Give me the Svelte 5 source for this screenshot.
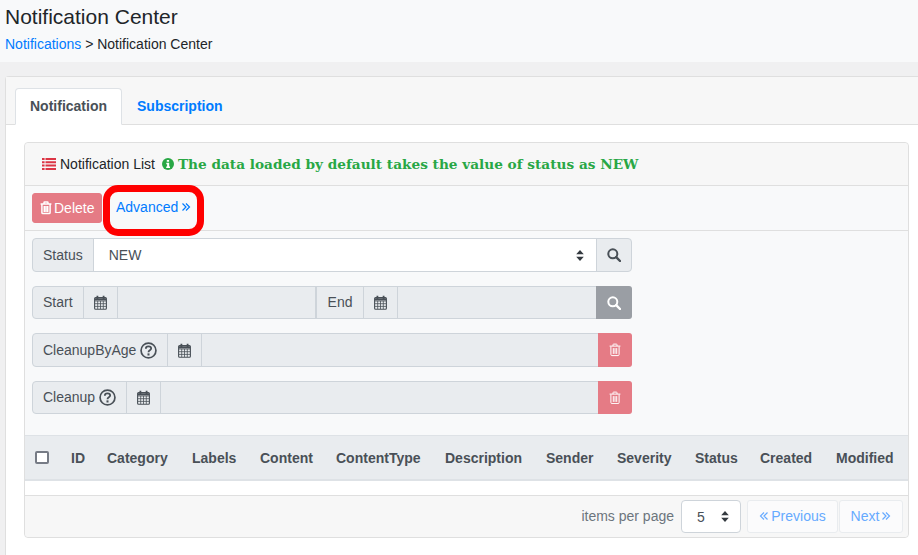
<script>
  const columns = ['ID','Category','Labels','Content','ContentType','Description','Sender','Severity','Status','Created','Modified'];
</script>

{#snippet cal()}
  <svg class="ic" width="13" height="15" viewBox="0 0 13 15" fill="none" stroke="#495057" stroke-width="1.1">
    <rect x="0.6" y="2.5" width="11.8" height="11.7" rx="1"/>
    <path d="M1 6h11M1 8.700h11M1 11.400h11M3.700 6v8M6.500 6v8M9.300 6v8" stroke-width=".8"/>
    <path d="M1 4.300h11" stroke-width="2.200"/>
    <path d="M3.400 .8v3.200M9.600 .8v3.200" stroke-width="1.800"/>
  </svg>
{/snippet}
{#snippet search(color)}
  <svg width="14" height="14" viewBox="0 0 14 14" fill="none" stroke={color} stroke-width="2">
    <circle cx="5.800" cy="5.800" r="4.500"/><path d="M9.200 9.200l3.800 3.800" stroke-width="2.400" stroke-linecap="round"/>
  </svg>
{/snippet}
{#snippet trash(size, sw)}
  <svg width={size} height={size*1.1} viewBox="0 0 12 13" fill="none" stroke="#fff" stroke-width={sw}>
    <path d="M1.900 3.400v8c0 .7.400 1.100 1 1.100h6.200c.6 0 1-.4 1-1.100v-8M.6 3h10.800M4 3V1.600c0-.4.2-.6.6-.6h2.800c.4 0 .6.2.6.6V3M4.300 5v5.800M6 5v5.800M7.700 5v5.800"/>
  </svg>
{/snippet}
{#snippet help()}
  <svg class="help" width="17" height="17" viewBox="0 0 16 16" fill="none" stroke="#495057">
    <circle cx="8" cy="8" r="7" stroke-width="1.600"/>
    <path d="M5.500 6.300c0-1.500 1.100-2.200 2.500-2.200s2.500.8 2.500 2c0 1.800-2.500 1.700-2.500 3.500" stroke-width="1.700"/>
    <path d="M8 10.700v2" stroke-width="1.900"/>
  </svg>
{/snippet}
{#snippet angles(dir)}
  <svg class="ang" width="10" height="10" viewBox="0 0 10 10" fill="none" stroke="currentColor" stroke-width="1.200">
    {#if dir === 'r'}<path d="M1.500 1.500L5 5 1.500 8.500M5 1.500L8.500 5 5 8.500"/>{:else}<path d="M8.500 1.500L5 5l3.500 3.500M5 1.500L1.500 5 5 8.500"/>{/if}
  </svg>
{/snippet}

<div class="page">
  <header class="top">
    <h1>Notification Center</h1>
    <div class="crumb"><a href="#n">Notifications</a> &gt; Notification Center</div>
  </header>

  <div class="band">
    <section class="outer">
      <nav class="tabs">
        <span class="tab active">Notification</span>
        <span class="tab">Subscription</span>
      </nav>
      <div class="tabbody">
        <div class="card">
          <div class="cardhead">
            <svg class="listic" width="14" height="12" viewBox="0 0 14 12" fill="#dc3545">
              <path d="M0 0h2.600v2H0zM3.500 0H14v2H3.500zM0 3.300h2.600v2H0zM3.500 3.300H14v2H3.500zM0 6.600h2.600v2H0zM3.500 6.600H14v2H3.500zM0 9.900h2.600v2H0zM3.500 9.900H14v2H3.500z"/>
            </svg>
            <span class="ctitle">Notification List</span>
            <svg class="info" width="12" height="12" viewBox="0 0 12 12">
              <circle cx="6" cy="6" r="6" fill="#28a745"/>
              <path d="M4.800 2h2.300v1.800H4.800zM4.300 4.800h2.900v3.600h.8v1.500H4.200V8.400h.9V6.300h-.8z" fill="#fff"/>
            </svg>
            <b class="note">The data loaded by default takes the value of status as NEW</b>
          </div>

          <div class="toolbar">
            <button class="del">{@render trash(12, 1.500)} Delete</button>
            <a class="adv" href="#a">Advanced {@render angles('r')}</a>
            <span class="mark"></span>
          </div>

          <div class="forms">
            <div class="group g1">
              <span class="addon">Status</span>
              <span class="select">NEW
                <svg class="caret" width="8" height="11" viewBox="0 0 8 11" fill="#343a40"><path d="M4 0l3.800 4.200H.2zM4 11L.2 6.800h7.600z"/></svg>
              </span>
              <span class="addon end btn">{@render search('#495057')}</span>
            </div>
            <div class="group g2">
              <span class="addon">Start</span>
              <span class="addon icon">{@render cal()}</span>
              <span class="field f1"></span>
              <span class="addon endlabel">End</span>
              <span class="addon icon">{@render cal()}</span>
              <span class="field"></span>
              <span class="addon end grey">{@render search('#fff')}</span>
            </div>
            <div class="group g3">
              <span class="addon">CleanupByAge {@render help()}</span>
              <span class="addon icon">{@render cal()}</span>
              <span class="field"></span>
              <span class="addon end red">{@render trash(12, 1)}</span>
            </div>
            <div class="group g4">
              <span class="addon">Cleanup {@render help()}</span>
              <span class="addon icon">{@render cal()}</span>
              <span class="field"></span>
              <span class="addon end red">{@render trash(12, 1)}</span>
            </div>
          </div>

          <div class="thead">
            <span class="check"></span>
            {#each columns as c}<span class="th">{c}</span>{/each}
          </div>
          <div class="row"></div>

          <footer class="foot">
            <span class="ipp">items per page</span>
            <span class="size">5
              <svg width="8" height="11" viewBox="0 0 8 11" fill="#343a40"><path d="M4 0l3.800 4.200H.2zM4 11L.2 6.800h7.600z"/></svg>
            </span>
            <span class="pg prev">{@render angles('l')} Previous</span>
            <span class="pg next">Next {@render angles('r')}</span>
          </footer>
        </div>
      </div>
    </section>
  </div>
</div>

<style>
  :global(body) { margin: 0; background: #fff; overflow: hidden; }
  .page { width: 918px; height: 555px; overflow: hidden; font-family: "Liberation Sans", Arial, sans-serif; font-size: 14px; color: #212529; }
  .top { height: 62px; background: #f8f9fa; padding: 5px 5px 0; box-sizing: border-box; }
  h1 { margin: 0; font-size: 21px; font-weight: 400; line-height: 24px; }
  .crumb { margin-top: 5px; line-height: 21px; }
  a { color: #007bff; text-decoration: none; }
  .band { background: #f0f0f1; padding: 14px 0 0 5px; }
  .outer { background: #fff; border: 1px solid #dfdfdf; border-right: 0; border-radius: 4px 0 0 0; height: 500px; }
  .tabs { display: flex; height: 48px; box-sizing: border-box; padding: 11px 0 0 9px; background: #f7f7f7; border-bottom: 1px solid #dfdfdf; }
  .tab { height: 36px; box-sizing: border-box; padding: 9px 14px; font-weight: 700; color: #007bff; line-height: 17px; border: 1px solid transparent; border-radius: 4px 4px 0 0; }
  .tab.active { background: #fff; color: #495057; border-color: #dee2e6 #dee2e6 #fff; height: 37px; }
  .tabbody { padding: 17px 9px 0 18px; }
  .card { position: relative; border: 1px solid #dfdfdf; border-radius: 4px; background: #f8f9fa; height: 396px; box-sizing: border-box; width: 885px; display: flex; flex-direction: column; }
  .cardhead { height: 43px; box-sizing: border-box; display: flex; align-items: center; padding: 0 0 0 17px; background: #f7f7f7; border-bottom: 1px solid #dfdfdf; border-radius: 4px 4px 0 0; }
  .listic { margin-right: 4px; }
  .ctitle { margin-right: 7px; }
  .info { margin-right: 4px; }
  .note { font-family: "DejaVu Serif", serif; font-size: 13.660px; color: #28a745; }
  .toolbar { height: 45px; flex: none; box-sizing: border-box; display: flex; align-items: center; padding: 0 0 0 7px; border-bottom: 1px solid #dfdfdf; position: relative; }
  .del { display: flex; align-items: center; gap: 2px; height: 30px; width: 70px; box-sizing: border-box; padding: 0 0 0 7px; background: #e57b85; color: #fff; border: 1px solid #e57b85; border-radius: 3px; font: 14px "Liberation Sans", sans-serif; }
  .adv { margin: -3px 0 0 14px; display: inline-flex; align-items: center; gap: 3px; }
  .mark { position: absolute; left: 78px; top: -1px; width: 101px; height: 51px; box-sizing: border-box; border: 7px solid #f00; border-radius: 15px; }
  .forms { padding: 7px 0 0 7px; flex: none; height: 204px; box-sizing: border-box; }
  .group { display: flex; width: 600px; height: 34px; box-sizing: border-box; border: 1px solid #ced4da; border-radius: 4px; background: #e9ecef; color: #495057; margin-bottom: 14px; }
  .g2, .g4 { height: 33px; }
  .g2 .addon, .g4 .addon { padding-bottom: 1px; }
  .addon { display: flex; align-items: center; gap: 4px; padding: 0 10px; border-right: 1px solid #ced4da; line-height: 1; white-space: nowrap; flex: none; }
  .addon.endlabel { padding-left: 11px; }
  .addon.end { width: 35px; box-sizing: border-box; justify-content: center; padding: 0; border-right: 0; margin-left: auto; border-radius: 0 3px 3px 0; }
  .btn { border-left: 1px solid #ced4da; margin: 0; }
  .addon.grey { width: 36px; background: #9a9ea4; margin: -1px -1px -1px 0; }
  .addon.red { width: 34px; background: #e57b85; margin: -1px -1px -1px 0; }
  .select { flex: 1; background: #fff; display: flex; align-items: center; justify-content: space-between; padding: 0 12px 0 15px; color: #495057; }
  .field { flex: 1; }
  .f1 { flex: none; width: 197px; border-right: 2px solid #ced4da; }
  .thead { height: 46px; flex: none; box-sizing: border-box; display: grid; grid-template-columns: 36px 36px 85px 68px 76px 109px 101px 71px 78px 65px 76px auto; align-items: center; padding-left: 10px; background: #e9ecef; border-top: 1px solid #dee2e6; border-bottom: 2px solid #dee2e6; }
  .check { width: 14px; height: 13px; background: #fff; border: 2px solid #767b85; border-radius: 2px; box-sizing: border-box; }
  .th { font-weight: 700; color: #495057; white-space: nowrap; }
  .row { height: 14px; background: #fff; flex: none; border-bottom: 1px solid #dfdfdf; }
  .foot { flex: 1; display: flex; align-items: center; justify-content: flex-end; padding-right: 5px; background: #f7f7f7; border-radius: 0 0 4px 4px; }
  .ipp { color: #6c757d; margin: -2px 7px 0 0; }
  .size { width: 60px; height: 33px; box-sizing: border-box; display: flex; align-items: center; justify-content: space-between; padding: 0 11px 0 15px; background: #fff; border: 1px solid #ced4da; border-radius: 4px; color: #495057; margin-right: 6px; }
  .pg { height: 33px; box-sizing: border-box; display: inline-flex; align-items: center; justify-content: center; gap: 2px; padding-bottom: 2px; background: #fbfbfc; border: 1px solid #e9ecef; border-radius: 3px; color: #66aaff; }
  .prev { width: 91px; margin-right: 1px; }
  .next { width: 64px; }
</style>
